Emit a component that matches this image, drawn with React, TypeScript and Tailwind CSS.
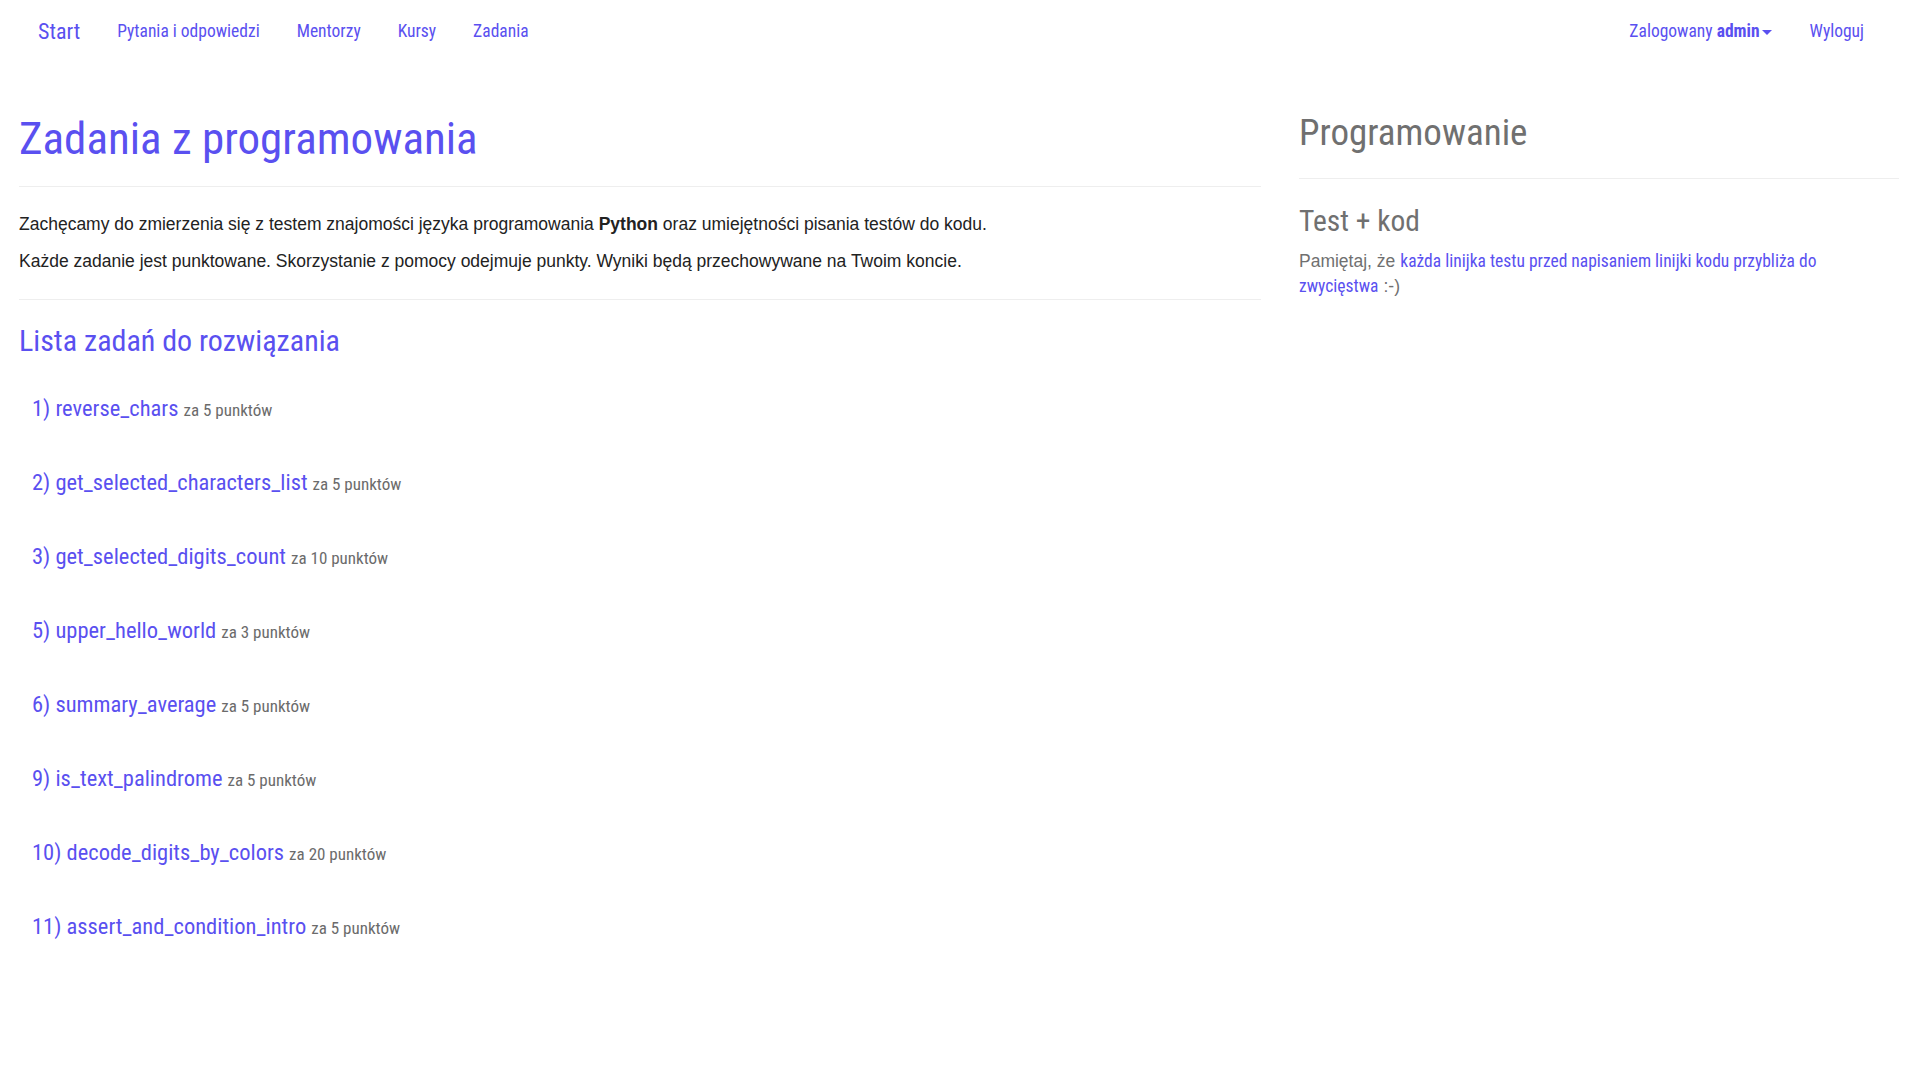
import React from "react";

const F = "font-['Roboto_Condensed','Roboto',sans-serif]";
const A = "font-['Liberation_Sans',Arial,sans-serif]";

const tasks = [
  ["1)", "reverse_chars", "5"],
  ["2)", "get_selected_characters_list", "5"],
  ["3)", "get_selected_digits_count", "10"],
  ["5)", "upper_hello_world", "3"],
  ["6)", "summary_average", "5"],
  ["9)", "is_text_palindrome", "5"],
  ["10)", "decode_digits_by_colors", "20"],
  ["11)", "assert_and_condition_intro", "5"],
];

export default function App() {
  return (
    <div className={`min-h-screen bg-white ${F}`}>
      <nav className="flex h-[62px] items-center justify-between pl-[38px] pr-[56px] text-[#5a50f0]">
        <div className="flex items-center gap-[37px]">
          <a className="text-[22px]">Start</a>
          <div className="flex items-center gap-[37px] text-[17.5px]">
            <a>Pytania i odpowiedzi</a>
            <a>Mentorzy</a>
            <a>Kursy</a>
            <a>Zadania</a>
          </div>
        </div>
        <div className="flex items-center gap-[38px] text-[17.5px]">
          <a className="flex items-center">
            Zalogowany&nbsp;<b className="font-bold">admin</b>
            <span className="ml-[2px] mt-[2px] inline-block h-0 w-0 border-x-[5px] border-t-[5px] border-x-transparent border-t-[#5a50f0]" />
          </a>
          <a>Wyloguj</a>
        </div>
      </nav>

      <div className="flex gap-[38px] pl-[19px] pr-[21px]">
        <main className="w-[1242px] shrink-0">
          <h1 className="mt-[52px] text-[45px] leading-[50px] text-[#5a50f0]">Zadania z programowania</h1>
          <hr className="mt-[22px] border-t border-[#eeeeee]" />
          <div className={`${A} mt-[27px] text-[17.5px] leading-[20px] text-[#222]`}>
            <p>
              Zachęcamy do zmierzenia się z testem znajomości języka programowania <b>Python</b> oraz umiejętności pisania testów do kodu.
            </p>
            <p className="mt-[17px]">
              Każde zadanie jest punktowane. Skorzystanie z pomocy odejmuje punkty. Wyniki będą przechowywane na Twoim koncie.
            </p>
          </div>
          <hr className="mt-[28px] border-t border-[#eeeeee]" />
          <h3 className="mt-[24px] text-[30px] leading-[34px] text-[#5a50f0]">Lista zadań do rozwiązania</h3>
          <ul className="mt-[35px] pl-[13px]">
            {tasks.map(([n, name, pts]) => (
              <li key={name} className="flex h-[74px] items-baseline">
                <a className="text-[22.5px] leading-[30px] text-[#5a50f0]">
                  {n} {name}
                </a>
                <span className="ml-[5px] text-[17px] leading-[22px] text-[#6b6b6b]">za {pts} punktów</span>
              </li>
            ))}
          </ul>
        </main>

        <aside className="w-[600px] shrink-0">
          <h2 className="mt-[49px] text-[37px] leading-[44px] text-[#707070]">Programowanie</h2>
          <hr className="mt-[23px] border-t border-[#eeeeee]" />
          <h3 className="mt-[26px] text-[29.5px] leading-[32px] text-[#707070]">Test + kod</h3>
          <p className="mt-[12px] text-[17.5px] leading-[25px] text-[#707070]">
            <span className={A}>Pamiętaj, że</span>
            <a className="ml-[5px] text-[#5a50f0]">każda linijka testu przed napisaniem linijki kodu przybliża do zwycięstwa</a>
            <span className={`${A} ml-[5px]`}>:-)</span>
          </p>
        </aside>
      </div>
    </div>
  );
}
